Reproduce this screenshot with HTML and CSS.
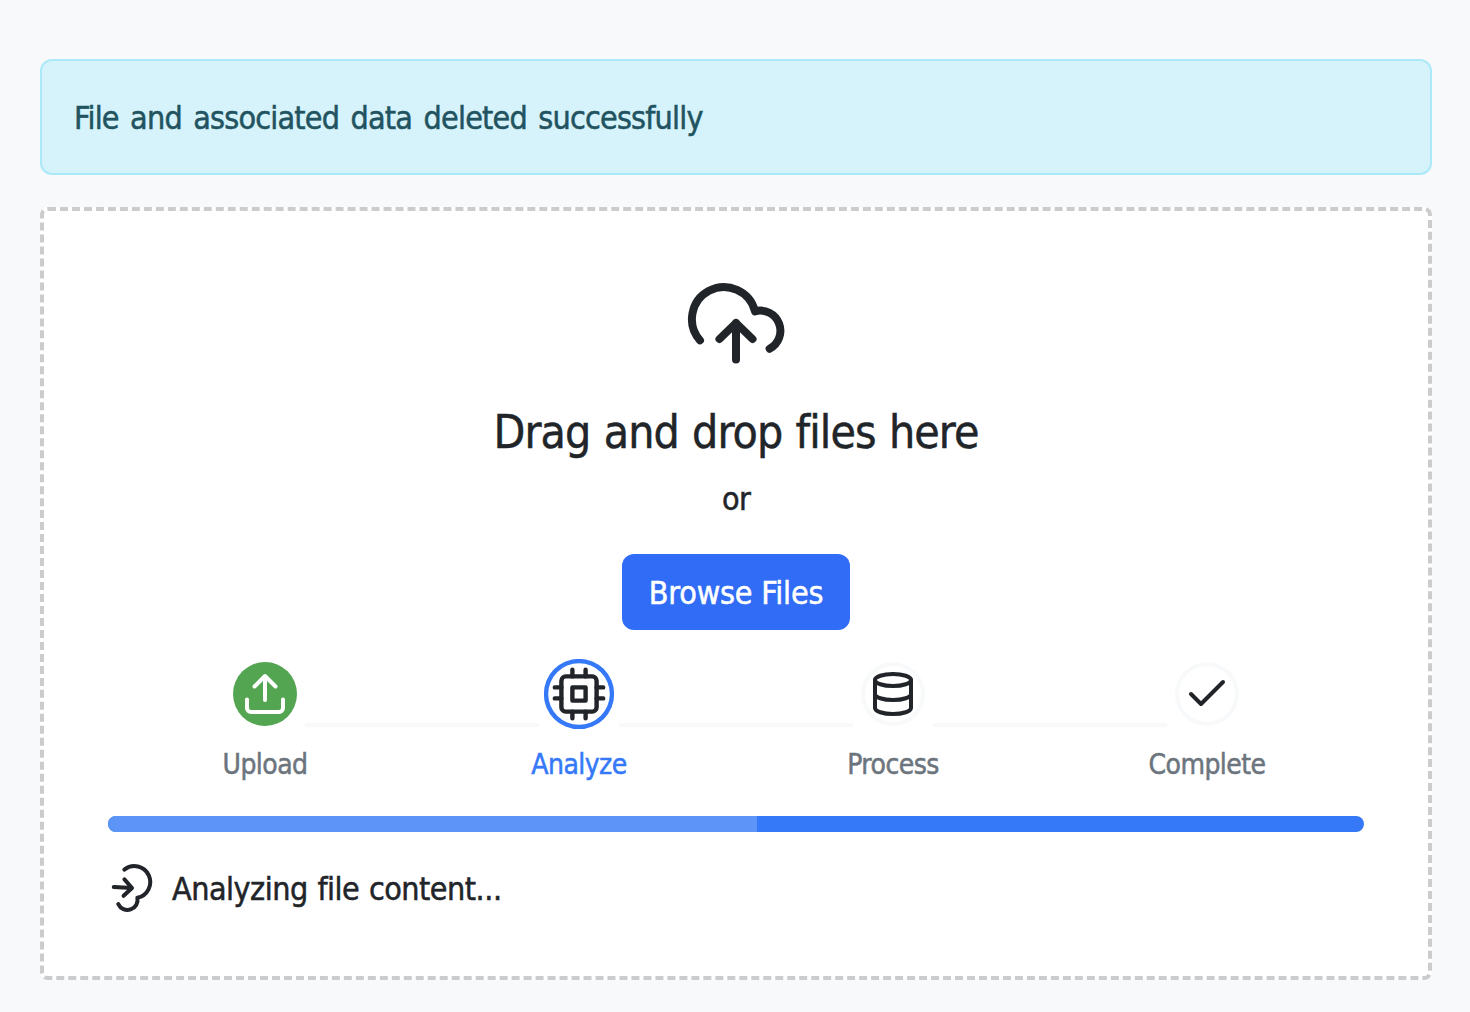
FILE: index.html
```html
<!DOCTYPE html>
<html lang="en">
<head>
<meta charset="utf-8">
<title>File upload</title>
<link rel="stylesheet" href="styles.css">
</head>
<body>
<main class="page">
  <div class="alert" role="alert">File and associated data deleted successfully</div>
  <section class="dropzone">
    <svg class="cloud" viewBox="0 0 96 96"><path d="M12 65.300A32 32 0 1 1 67 36.300A20.200 20.200 0 0 1 81.600 73.700M48 84.500V48M31.500 64L48 48L64.500 64"/></svg>
    <h4 class="title">Drag and drop files here</h4>
    <p class="or">or</p>
    <button class="browse" type="button">Browse Files</button>
    <div class="steps">
      <div class="step done">
        <div class="track"><i class="line hidden"></i>
          <div class="badge"><svg viewBox="0 0 64 64"><path d="M32 38V14M21.500 24.500L32 14L42.500 24.500M14 37.500V46a4 4 0 0 0 4 4H46a4 4 0 0 0 4-4V37.500"/></svg></div>
        <i class="line"></i></div>
        <div class="label">Upload</div>
      </div>
      <div class="step active">
        <div class="track"><i class="line"></i>
          <div class="badge"><svg viewBox="0 0 64 64"><rect x="16" y="16" width="32" height="32" rx="4"/><rect x="26" y="26" width="12" height="12"/><path d="M26 10V16M38 10V16M26 48V54M38 48V54M10 26H16M10 36H16M48 26H54M48 36H54"/></svg></div>
        <i class="line"></i></div>
        <div class="label">Analyze</div>
      </div>
      <div class="step">
        <div class="track"><i class="line"></i>
          <div class="badge"><svg viewBox="0 0 64 64"><ellipse cx="32" cy="18" rx="18" ry="6"/><path d="M14 18V46C14 49.300 22 52 32 52S50 49.300 50 46V18M14 32C14 35.300 22 38 32 38S50 35.300 50 32"/></svg></div>
        <i class="line"></i></div>
        <div class="label">Process</div>
      </div>
      <div class="step">
        <div class="track"><i class="line"></i>
          <div class="badge"><svg viewBox="0 0 64 64"><path d="M16 32L26 42L48 20"/></svg></div>
        <i class="line hidden"></i></div>
        <div class="label">Complete</div>
      </div>
    </div>
    <div class="progress"><div class="bar" style="width:51.67%"></div></div>
    <div class="status">
      <svg class="spinner" viewBox="0 0 96 96"><path d="M12 65.300A32 32 0 1 1 67 36.300A20.200 20.200 0 0 1 81.600 73.700M48 84.500V48M31.500 64L48 48L64.500 64"/></svg>
      <span class="status-text">Analyzing file content...</span>
    </div>
  </section>
</main>
</body>
</html>
```
FILE: styles.css
```css
* { box-sizing: border-box; }
body {
  margin: 0;
  background: #f8f9fb;
  color: #212529;
  font: 32px/48px "DejaVu Sans Condensed", "DejaVu Sans", sans-serif;
  font-stretch: condensed;
  letter-spacing: -0.8px;
  word-spacing: 3px;
  -webkit-text-stroke: 0.5px currentColor;
}
svg { fill: none; stroke: currentColor; stroke-width: 4; stroke-linecap: round; stroke-linejoin: round; display: block; overflow: visible; }
.page { padding: 59px 38px 32px 40px; display: flex; flex-direction: column; gap: 32px; }
.alert {
  height: 116px;
  padding: 33px 32px;
  border: 2px solid #abe9f8;
  border-radius: 12px;
  background: #d6f3fb;
  color: #215360;
  white-space: nowrap;
}
.dropzone {
  height: 773px;
  padding: 64px;
  border: 4px dashed #ccc;
  border-radius: 8px;
  background: #fff;
  display: flex;
  flex-direction: column;
  align-items: center;
}
.dropzone > * { flex: none; }
.cloud { width: 96px; height: 96px; stroke-width: 8; }
.title { margin: 33px 0 0; font-size: 46px; line-height: 56px; font-weight: 400; letter-spacing: -0.9px; word-spacing: 1px; white-space: nowrap; }
.or { margin: 15px 0 0; }
.browse {
  margin-top: 31px;
  width: 228px;
  height: 76px;
  padding: 1px 0 0;
  border: 0;
  border-radius: 12px;
  background: #306cf5;
  color: #fff;
  font: inherit;
  letter-spacing: -0.2px;
  word-spacing: 0;
  white-space: nowrap;
}
.steps { margin-top: 32px; width: 100%; display: grid; grid-template-columns: repeat(4, 1fr); }
.track { display: flex; gap: 8px; height: 65px; }
.line { flex: 1; height: 4px; margin-top: 61px; background: #f9f9fa; }
.line.hidden { visibility: hidden; }
.badge { width: 64px; height: 64px; flex: none; border-radius: 50%; box-shadow: inset 0 0 0 4px #f8f9fa; }
.done .badge { background: #53a551; box-shadow: none; color: #fff; }
.active .badge { box-shadow: inset 0 0 0 4px #3579f8; transform: scale(1.1); }
.label { margin-top: 17px; font-size: 28px; line-height: 42px; letter-spacing: -0.55px; text-align: center; color: #6c757d; }
.active .label { color: #3579f8; }
.progress { margin-top: 30px; width: 100%; height: 16px; border-radius: 8px; background: #3579f8; overflow: hidden; }
.bar { height: 100%; background: #5d94f8; }
.status { margin-top: 31px; width: 100%; display: flex; align-items: center; gap: 16px; white-space: nowrap; }
.spinner { width: 48px; height: 48px; stroke-width: 8; transform: rotate(93deg); }
.status-text { padding-top: 2px; letter-spacing: -0.5px; word-spacing: 1px; }
```
